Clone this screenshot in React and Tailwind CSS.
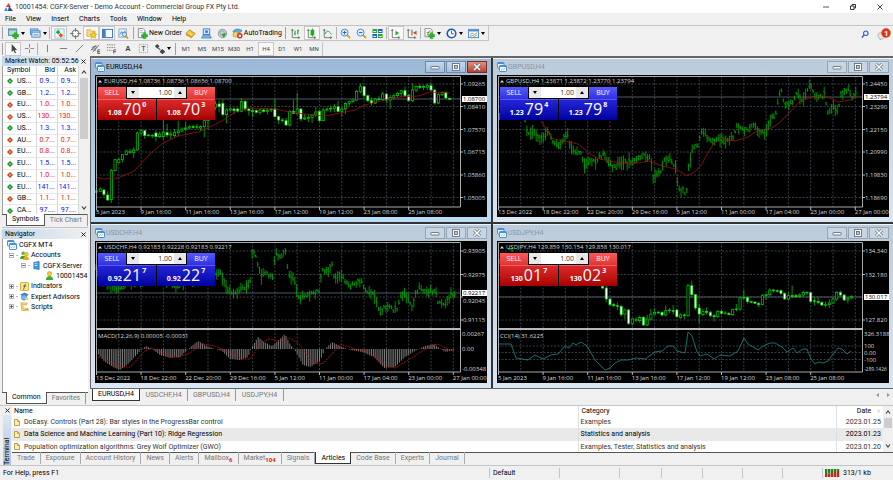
import React, { useState } from "react";

// ---------- chart data ----------
// every candle is [open, close, high, low] on the vertical scale of the pane

const eurCandles = [
  [415, 410, 403, 416], [412, 405, 400, 414], [408, 421, 405, 428], [423, 438, 412, 440],
  [437, 350, 345, 447], [350, 317, 315, 352], [325, 317, 312, 328], [317, 302, 300, 325],
  [302, 291, 287, 305], [295, 293, 285, 300], [295, 288, 280, 312], [288, 237, 233, 290],
  [237, 230, 225, 245], [230, 245, 228, 255], [245, 243, 240, 248], [245, 244, 240, 252],
  [237, 248, 230, 262], [248, 240, 232, 252], [248, 234, 195, 256], [236, 243, 210, 250],
  [243, 240, 232, 255], [245, 236, 225, 250], [236, 231, 200, 248], [231, 225, 220, 235],
  [225, 222, 205, 232], [222, 218, 214, 226], [218, 220, 212, 224], [220, 218, 210, 226],
  [222, 218, 214, 232], [218, 200, 195, 250], [200, 190, 180, 225], [190, 165, 160, 195],
  [160, 150, 140, 168], [150, 158, 140, 175], [148, 182, 137, 188], [182, 168, 162, 208],
  [168, 165, 160, 172], [165, 170, 160, 180], [165, 172, 160, 176], [172, 142, 132, 175],
  [142, 165, 138, 172], [165, 170, 160, 185], [170, 172, 160, 190], [170, 175, 166, 178],
  [175, 168, 163, 182], [168, 172, 164, 176], [172, 168, 162, 182], [168, 166, 162, 174],
  [165, 188, 135, 190], [188, 198, 185, 210], [198, 200, 192, 205], [200, 213, 192, 216],
  [213, 172, 168, 218], [172, 178, 137, 180], [178, 165, 117, 182], [165, 195, 162, 202],
  [195, 192, 180, 198], [193, 190, 182, 205], [190, 183, 180, 207], [183, 174, 158, 188],
  [172, 200, 168, 203], [200, 168, 160, 202], [168, 165, 160, 172], [165, 163, 155, 175],
  [163, 158, 150, 175], [158, 172, 140, 175], [172, 165, 160, 188], [165, 148, 145, 180],
  [148, 143, 140, 155], [143, 138, 136, 146], [138, 112, 108, 140], [112, 98, 88, 118],
  [98, 125, 95, 130], [125, 140, 122, 145], [140, 147, 130, 155], [147, 135, 132, 150],
  [135, 136, 125, 140], [136, 120, 113, 140], [120, 138, 118, 148], [138, 130, 122, 165],
  [130, 125, 120, 136], [125, 118, 114, 130], [118, 110, 108, 130], [110, 125, 98, 130],
  [125, 140, 120, 143], [140, 108, 88, 145], [108, 97, 95, 115], [97, 100, 90, 105],
  [100, 97, 92, 108], [100, 95, 88, 108], [95, 108, 85, 112], [108, 147, 105, 152],
  [147, 122, 118, 150], [122, 115, 112, 126], [115, 132, 112, 136], [133, 136, 130, 138],
];

const jpyCandles = [
  [187, 192, 184, 196], [192, 225, 186, 235], [225, 242, 222, 246], [242, 245, 236, 250],
  [245, 246, 235, 258], [247, 272, 243, 278], [270, 258, 254, 285], [258, 298, 255, 302],
  [298, 285, 282, 305], [288, 287, 280, 294], [290, 280, 275, 296], [280, 303, 276, 306],
  [303, 285, 272, 306], [285, 270, 255, 290], [270, 265, 253, 274], [265, 267, 260, 270],
  [265, 273, 262, 278], [273, 260, 245, 278], [260, 258, 252, 268], [260, 261, 243, 272],
  [258, 278, 254, 282], [280, 273, 268, 284], [273, 274, 268, 286], [275, 185, 180, 278],
  [185, 212, 170, 218], [212, 252, 210, 258], [252, 270, 240, 298], [272, 263, 255, 276],
  [262, 265, 250, 272], [265, 275, 260, 280], [275, 278, 270, 292], [278, 262, 258, 282],
  [262, 268, 258, 272], [268, 267, 262, 272], [268, 272, 264, 274], [272, 257, 254, 275],
  [257, 255, 240, 262], [255, 222, 218, 260], [222, 220, 198, 228], [220, 233, 218, 238],
  [233, 234, 230, 238], [234, 238, 232, 240], [238, 242, 234, 250], [242, 215, 210, 244],
  [215, 212, 208, 228], [212, 198, 192, 218], [198, 200, 194, 206], [200, 201, 196, 206],
  [200, 208, 196, 214], [208, 225, 205, 228], [225, 215, 206, 230], [215, 217, 185, 222],
  [215, 218, 210, 222], [218, 213, 208, 222], [213, 205, 200, 218], [205, 206, 202, 214],
  [206, 232, 204, 236], [230, 232, 220, 245], [232, 235, 222, 240], [235, 243, 232, 246],
  [243, 242, 232, 250], [242, 237, 225, 252], [237, 225, 220, 240], [225, 205, 202, 230],
  [205, 213, 200, 218], [213, 228, 210, 232], [228, 224, 218, 238], [222, 218, 214, 226],
];

const eurAverage = [[1, 102], [8, 104], [23, 103], [39, 96], [55, 79], [68, 68], [83, 61], [103, 57], [113, 53], [130, 44], [140, 37], [150, 34], [158, 33], [180, 34], [195, 37], [210, 39], [230, 41], [250, 37], [260, 35], [270, 30], [290, 25], [305, 22], [323, 21], [335, 17], [355, 18]];

const gbpPath = [[28, 48], [30, 58], [37, 56], [41, 62], [46, 64], [51, 56], [56, 66], [61, 72], [67, 62], [71, 62], [75, 74], [79, 80], [84, 76], [87, 93], [93, 87], [99, 87], [107, 77], [111, 89], [119, 92], [123, 89], [129, 87], [139, 84], [148, 80], [154, 84], [156, 104], [160, 99], [163, 99], [167, 84], [173, 84], [179, 92], [181, 116], [185, 113], [189, 122], [191, 94], [195, 77], [201, 69], [205, 57], [209, 62], [215, 66], [221, 64], [226, 67], [233, 64], [237, 63], [239, 50], [245, 54], [251, 56], [257, 49], [261, 56], [268, 59], [271, 49], [276, 42], [279, 38], [282, 19], [284, 16], [287, 29], [293, 31], [299, 19], [305, 24], [309, 19], [314, 11], [317, 19], [321, 24], [327, 19], [331, 38], [335, 32], [341, 36], [344, 16], [351, 16], [355, 22], [359, 16]];

const gbpAverage = [[44, 46], [49, 54], [56, 64], [68, 66], [81, 69], [93, 79], [103, 84], [118, 87], [135, 89], [153, 86], [165, 91], [179, 94], [190, 101], [199, 96], [205, 89], [210, 79], [217, 68], [225, 64], [238, 66], [251, 62], [261, 55], [271, 55], [281, 49], [293, 37], [303, 26], [315, 22], [328, 21], [341, 27], [353, 25], [360, 22]];

const chfPath = [[1, 30], [10, 40], [18, 46], [24, 48], [30, 44], [50, 38], [70, 38], [81, 46], [100, 38], [116, 30], [120, 34], [124, 30], [127, 35], [132, 49], [137, 52], [143, 50], [148, 46], [155, 45], [157, 9], [162, 18], [166, 35], [173, 33], [178, 38], [180, 14], [186, 16], [191, 8], [193, 33], [200, 41], [204, 58], [210, 55], [217, 52], [224, 51], [227, 30], [233, 30], [237, 23], [239, 38], [245, 33], [250, 40], [256, 46], [263, 41], [268, 43], [273, 53], [279, 50], [283, 68], [285, 75], [289, 66], [295, 67], [302, 69], [306, 53], [312, 56], [317, 64], [320, 53], [325, 48], [333, 50], [340, 50], [343, 60], [350, 64], [353, 56], [361, 52]];

const macdPath = [[1, 108], [3, 113], [10, 121], [18, 126], [25, 129], [32, 124], [38, 118], [45, 110], [51, 105], [57, 108], [65, 114], [75, 117], [85, 116], [93, 108], [103, 100], [112, 105], [120, 108], [127, 110], [135, 118], [145, 119], [153, 116], [157, 106], [163, 96], [169, 101], [177, 105], [185, 98], [190, 93], [195, 103], [201, 111], [208, 124], [215, 126], [225, 120], [230, 108], [237, 101], [245, 105], [255, 109], [267, 111], [279, 116], [289, 127], [300, 126], [310, 116], [320, 110], [330, 105], [339, 103], [350, 111], [360, 109]];

const macdSignal = [[3, 116], [10, 118], [23, 126], [35, 126], [50, 110], [57, 107], [70, 113], [83, 116], [95, 112], [108, 103], [120, 105], [133, 111], [147, 118], [155, 118], [165, 103], [173, 98], [185, 100], [195, 97], [205, 104], [217, 122], [227, 123], [237, 113], [245, 103], [260, 108], [275, 111], [290, 124], [300, 127], [315, 118], [330, 108], [342, 103], [353, 108], [359, 110]];

const cciPath = [[1, 103], [14, 103], [19, 117], [31, 119], [38, 114], [46, 118], [54, 114], [61, 113], [68, 105], [72, 107], [76, 102], [79, 104], [84, 101], [90, 105], [98, 119], [108, 129], [113, 127], [118, 122], [124, 119], [131, 119], [139, 117], [148, 118], [158, 111], [165, 110], [171, 105], [176, 105], [180, 110], [188, 112], [191, 91], [195, 95], [200, 111], [203, 115], [210, 113], [217, 118], [223, 114], [233, 115], [241, 110], [247, 97], [251, 103], [261, 109], [266, 105], [273, 102], [278, 102], [285, 106], [290, 111], [296, 107], [300, 112], [306, 108], [310, 108], [314, 118], [318, 123], [321, 121], [326, 122], [331, 120], [336, 113], [341, 107], [345, 108], [350, 113], [354, 110]];

const decemberDates = ["13 Dec 2022", "18 Dec 22:00", "22 Dec 20:00", "29 Dec 16:00", "5 Jan 12:00", "11 Jan 00:00", "17 Jan 04:00", "23 Jan 00:00", "27 Jan 00:00"];
const januaryDates = ["5 Jan 2023", "9 Jan 16:00", "11 Jan 16:00", "13 Jan 16:00", "17 Jan 12:00", "19 Jan 12:00", "23 Jan 08:00", "25 Jan 08:00"];

const quotes = [
  ["US...", "0.9...", "0.9...", true],
  ["GB...", "1.2...", "1.2...", true],
  ["EU...", "1.0...", "1.0...", false],
  ["US...", "130...", "130...", false],
  ["US...", "1.3...", "1.3...", true],
  ["AU...", "0.7...", "0.7...", false],
  ["EU...", "0.8...", "0.8...", false],
  ["EU...", "1.5...", "1.5...", true],
  ["EU...", "1.0...", "1.0...", false],
  ["EU...", "141...", "141...", true],
  ["GB...", "1.1...", "1.1...", false],
  ["CA...", "97....", "97....", true],
];

const articles = [
  ["DoEasy. Controls (Part 28): Bar styles in the ProgressBar control", "Examples", "2023.01.25"],
  ["Data Science and Machine Learning (Part 10): Ridge Regression", "Statistics and analysis", "2023.01.23"],
  ["Population optimization algorithms: Grey Wolf Optimizer (GWO)", "Examples, Tester, Statistics and analysis", "2023.01.20"],
];

const terminalTabs = [
  ["Trade"], ["Exposure"], ["Account History"], ["News"], ["Alerts"], ["Mailbox", "6"],
  ["Market", "104"], ["Signals"], ["Articles"], ["Code Base"], ["Experts"], ["Journal"],
];

const FIRST_X = 1.5;
const STEP = 22.3;

const toPoints = (list) => list.map((p) => p.join(",")).join(" ");

// linear interpolation along a path of [x, y]
function valueAt(path, x) {
  for (let i = 1; i < path.length; i++) {
    if (x <= path[i][0]) {
      const [x0, y0] = path[i - 1];
      const [x1, y1] = path[i];
      return y0 + ((y1 - y0) * (x - x0)) / (x1 - x0);
    }
  }
  return path[path.length - 1][1];
}

// repeatable noise between 0 and 1
function noise(n) {
  const v = Math.sin(n * 127.1) * 43758.5453;
  return v - Math.floor(v);
}

// ---------- chart parts ----------

function Candles({ candles, start = 0, top }) {
  return candles.map(([open, close, high, low], i) => {
    const x = FIRST_X + (start + i) * (STEP / 6);
    const y = (v) => (v - top) / 3;
    const down = close > open;
    return (
      <g key={i} stroke="#00d400" strokeWidth="0.7">
        <line x1={x} x2={x} y1={y(high)} y2={y(low)} />
        <rect
          x={x - 1.1}
          width="2.2"
          y={y(Math.min(open, close))}
          height={Math.max(Math.abs(open - close) / 3, 0.6)}
          fill={down ? "#fff" : "#000"}
        />
      </g>
    );
  });
}

function Bars({ path }) {
  let d = "";
  const last = path[path.length - 1][0];
  for (let i = 0, x = path[0][0]; x <= last; i++, x += STEP / 12) {
    const mid = valueAt(path, x) + (noise(i) - 0.5) * 4;
    const up = 1.5 + noise(i + 400) ** 2 * 7;
    const down = 1.5 + noise(i + 800) ** 2 * 7;
    d += `M${x.toFixed(1)} ${(mid - up).toFixed(1)}V${(mid + down).toFixed(1)}`;
    d += `M${(x - 0.9).toFixed(1)} ${(mid - 1).toFixed(1)}h.9m0 1.5h.9`;
  }
  return <path d={d} stroke="#00b000" strokeWidth="0.8" fill="none" />;
}

function Macd() {
  let d = "";
  for (let x = 1.5; x < 360; x += STEP / 12) {
    d += `M${x.toFixed(1)} 108V${valueAt(macdPath, x).toFixed(1)}`;
  }
  return (
    <g fill="none">
      <path d={d} stroke="#989898" strokeWidth="0.8" />
      <polyline points={toPoints(macdSignal)} stroke="#d01010" strokeWidth="0.8" strokeDasharray="2 1" />
    </g>
  );
}

function Chart({ title, rows, prices, current, dates, indicator, children }) {
  const bottom = indicator ? 131 : 132;
  return (
    <svg viewBox="0 0 392 142" className="block w-full bg-black font-['Open_Sans',sans-serif]" role="img" aria-label={title}>
      <g stroke="#4c5964" strokeWidth="0.7" strokeDasharray="2 1.5">
        {Array.from({ length: 16 }, (_, i) => (
          <line key={i} x1={FIRST_X + (i + 1) * STEP} x2={FIRST_X + (i + 1) * STEP} y1="1" y2={bottom} />
        ))}
        {rows.map((y) => (
          <line key={y} x1="1" x2="365" y1={y} y2={y} />
        ))}
      </g>
      <line x1="1" x2="365" y1={current.y} y2={current.y} stroke="#4c5964" />
      {children}
      <path d={`M1.5 ${bottom}V1.5H365.5V${bottom}Z`} fill="none" stroke="#a8a8a8" />
      {indicator && <rect x="1" y="87" width="365" height="2" fill="#b8b8b8" />}
      <g fill="#d8d8d8" fontSize="6">
        <path d="M3 7.500l2-2.500 2 2.500z" />
        <text x="9" y="8">{title}</text>
        {indicator && <text x="3" y="97">{indicator.title}</text>}
        {prices.map(([label, y, labelY = y]) => (
          <g key={label}>
            <path d={`M365 ${y}h3`} stroke="#b8b8b8" />
            <text x="368" y={labelY + 2}>{label}</text>
          </g>
        ))}
        {indicator?.labels.map(([label, y]) => (
          <text key={label} x="367" y={y + 2} fontSize={label.length > 8 ? 5 : 6}>{label}</text>
        ))}
        {dates.map((label, i) => (
          <g key={label}>
            <path d={`M${FIRST_X + i * STEP * 2} ${bottom}v3`} stroke="#b8b8b8" />
            <text x={i * STEP * 2 + 1} y="139">{label}</text>
          </g>
        ))}
      </g>
      <rect x="367" y={current.y - 3} width="25" height="6" fill="#fff" />
      <text x="368" y={current.y + 2} fontSize="6" fill="#000">{current.label}</text>
    </svg>
  );
}

// ---------- one click trading ----------

function Price({ side, head, main, tail, tone }) {
  return (
    <button
      aria-label={side}
      className={`flex flex-1 items-start justify-center gap-px border-t text-white ${
        tone === "red"
          ? "border-[#f06060] bg-gradient-to-b from-[#dc2828] to-[#a80000]"
          : "border-[#5858f0] bg-gradient-to-b from-[#2424d8] to-[#0000a0]"
      }`}
    >
      <span className="pt-2 text-[7px] leading-[10px] font-bold">{head}</span>
      <span className="text-[16px] leading-[19px]">{main}</span>
      <span className="pt-px text-[7px] leading-[8px] font-bold">{tail}</span>
    </button>
  );
}

function TradePanel({ tone, sell, buy }) {
  const [lots, setLots] = useState("1.00");
  const top = tone === "red" ? "bg-gradient-to-b from-[#ff5858] to-[#e03434]" : "bg-gradient-to-b from-[#5858ff] to-[#3030e4]";
  return (
    <div className="absolute top-3 left-[3px] flex h-[33px] w-[117px] flex-col bg-black font-['Open_Sans',sans-serif]">
      <div className="flex h-3">
        <button className={`w-7 text-[7px] leading-3 text-white ${top}`}>SELL</button>
        <div className="flex flex-1 border-x border-b border-black bg-white">
          <button aria-label="Less" className="flex w-3 items-center justify-center bg-[#e8e8e8]">
            <svg viewBox="0 0 4 3" className="h-[3px] w-1"><path d="M0 0h4L2 3z" /></svg>
          </button>
          <input
            aria-label="Volume"
            value={lots}
            onChange={(e) => setLots(e.target.value)}
            className="w-0 flex-1 bg-white px-0.5 text-right text-[7px] leading-[11px] text-[#333]"
          />
          <button aria-label="More" className="flex w-3 items-center justify-center bg-[#e8e8e8]">
            <svg viewBox="0 0 4 3" className="h-[3px] w-1"><path d="M0 3h4L2 0z" /></svg>
          </button>
        </div>
        <button className={`w-7 text-[7px] leading-3 text-white ${top}`}>BUY</button>
      </div>
      <div className="flex flex-1 gap-px">
        <Price side="Sell" tone={tone} head={sell[0]} main={sell[1]} tail={sell[2]} />
        <Price side="Buy" tone={tone} head={buy[0]} main={buy[1]} tail={buy[2]} />
      </div>
    </div>
  );
}

// ---------- chart window ----------

function WindowIcon() {
  return (
    <svg viewBox="0 0 10 10" className="size-[10px] shrink-0" aria-hidden="true">
      <rect x="0.5" y="0.500" width="6.500" height="5.500" rx="0.600" fill="#e4f2ff" stroke="#4a90d0" />
      <path d="M0.500 1.500h6.500" stroke="#4a90d0" />
      <rect x="2.500" y="3.500" width="7" height="6" rx="0.600" fill="#f4faff" stroke="#4a90d0" />
      <path d="M2.500 4.500h7" stroke="#4a90d0" />
      <path d="M4 8l1.500-1.500 1 1L8.500 6" stroke="#7ab0dc" strokeWidth="0.700" fill="none" />
    </svg>
  );
}

function ChartWindow({ name, active, panel, children }) {
  const button = active
    ? "border-[#6e88a6] bg-gradient-to-b from-[#c4d8ee] to-[#a4bedb]"
    : "border-[#95a5b8] bg-[#c8d6e4]";
  return (
    <section
      className={`border-t px-1 pb-[5px] ${
        active ? "border-[#dcebfa] bg-gradient-to-b from-[#9cb8d6] to-[#b9dcf4]" : "border-[#eef4fa] bg-gradient-to-b from-[#bccbda] to-[#d9e6f4]"
      }`}
    >
      <header className="flex h-4 items-center gap-px">
        <WindowIcon />
        <h2 className={`flex-1 text-[7px] leading-[10px] ${active ? "text-black" : "text-[#8a96a2]"}`}>{name}</h2>
        <button aria-label="Minimize" className={`flex h-3 w-5 items-center justify-center border ${button}`}>
          <svg viewBox="0 0 10 8" className="h-2 w-[10px]"><rect x="1" y="3.500" width="8" height="2.500" rx="0.500" fill="#fff" stroke="#55606c" strokeWidth="0.800" /></svg>
        </button>
        <button aria-label="Maximize" className={`flex h-3 w-5 items-center justify-center border ${button}`}>
          <svg viewBox="0 0 10 8" className="h-2 w-[10px]" fill="none">
            <rect x="1.500" y="0.500" width="7" height="7" fill="#fff" stroke="#55606c" strokeWidth="0.800" />
            <rect x="3.500" y="2.500" width="3" height="3" stroke="#55606c" strokeWidth="0.800" fill="#b8c8d8" />
          </svg>
        </button>
        <button
          aria-label="Close"
          className={`flex h-3 w-5 items-center justify-center border ${
            active ? "border-[#7c2c20] bg-gradient-to-b from-[#e09080] to-[#c03c28]" : "border-[#95a5b8] bg-[#c8d6e4]"
          }`}
        >
          <svg viewBox="0 0 10 8" className="h-2 w-[10px]">
            <path d="M2 1l6 6M8 1L2 7" stroke="#55606c" strokeWidth="2.800" />
            <path d="M2 1l6 6M8 1L2 7" stroke="#fff" strokeWidth="1.600" />
          </svg>
        </button>
      </header>
      <div className="relative">
        {children}
        <TradePanel {...panel} />
      </div>
    </section>
  );
}

// ---------- toolbar icons, all on a 12 x 12 grid ----------

const plus = <path d="M6.500 5.500h2v-2h2.500v2h2V8h-2v2H8.500V8h-2z" transform="translate(-1.500 1.700)" fill="#20c020" stroke="#087808" strokeWidth="0.400" />;
const axes = <path d="M2.500 1v9.500H11M1 2.500h3M9.500 9v3" fill="none" stroke="#686868" strokeWidth="0.900" />;

const icons = {
  newChart: <><rect x="0.500" y="1" width="9" height="7" fill="#b8dcc0" stroke="#4c8ab8" /><path d="M1 2h8" stroke="#4c8ab8" />{plus}</>,
  profiles: <><rect x="0.500" y="1" width="8" height="6" fill="#b4d4f4" stroke="#4a88c4" /><rect x="2" y="3" width="9" height="7" fill="#dcecfc" stroke="#4a88c4" /><path d="M2 4.500h9M4 7.500h5" stroke="#4a88c4" /></>,
  market: <><rect x="1" y="1" width="10" height="10" fill="#eef7fe" stroke="#8fc0e8" /><path d="M2 4.500L4.500 2 7 4.500 4.500 7z" fill="#10b020" /><path d="M5 8l2.500-2.500L10 8l-2.500 2.500z" fill="#f05018" /></>,
  target: <><circle cx="6" cy="6" r="3.600" fill="#fff" stroke="#777" strokeWidth="1.200" /><path d="M6 0v4M6 8v4M0 6h4M8 6h4" stroke="#777" strokeWidth="1.200" /></>,
  navigator: <><path d="M1 2h4l1 1.500h4V9H1z" fill="#f8dc80" stroke="#c89820" strokeWidth="0.700" /><path d="M8 4l1.200 2.500 2.600.3-2 1.800.6 2.700L8 10l-2.400 1.300.6-2.700-2-1.800 2.600-.3z" fill="#fcd428" stroke="#b88410" strokeWidth="0.500" /></>,
  terminal: <><rect x="0.500" y="1.500" width="11" height="9" fill="#f4faff" stroke="#3070b8" /><rect x="1" y="2" width="3" height="8" fill="#3c80cc" /></>,
  tester: <><rect x="1" y="1" width="8" height="9" fill="#e8f1fa" stroke="#8ca8c4" /><path d="M2 7l2-3 1.500 2L8 3" fill="none" stroke="#3880c0" /><circle cx="7" cy="7" r="2.300" fill="#d4ecff" stroke="#4880b0" /><path d="M8.500 8.500L11 11.500" stroke="#d09818" strokeWidth="1.600" /></>,
  order: <><path d="M1.500 0.500h5l2 2v8h-7z" fill="#fff" stroke="#667" strokeWidth="0.800" /><path d="M3 3h3M3 5h4" stroke="#889" strokeWidth="0.700" />{plus}</>,
  editor: <><path d="M1 6l4-4 6 4-4 4.500z" fill="#f4c430" stroke="#9c6c08" strokeWidth="0.700" /><path d="M1 6l6 3v2L1 8z" fill="#d89418" /><path d="M3.500 5l4 2.500" stroke="#fff4b0" /></>,
  signal: <><rect x="2.500" y="1" width="7" height="6" fill="#dceefe" stroke="#3878c8" /><circle cx="6" cy="4" r="1.600" fill="#3878c8" /><path d="M0.500 11l2-3.500h7l2 3.500z" fill="#78b0e8" stroke="#3878c8" strokeWidth="0.700" /></>,
  globe: <><circle cx="6" cy="6" r="4.600" fill="#c8d4d8" stroke="#78888c" strokeWidth="0.800" /><circle cx="5.500" cy="5.500" r="2.500" fill="none" stroke="#90a0a4" /><path d="M5 6.500l5-1L7.500 11z" fill="#30a030" /></>,
  auto: <><path d="M1 4c1-3 7-4 10-1L6.500 7z" fill="#5ab0e0" stroke="#2470a8" strokeWidth="0.600" /><circle cx="4" cy="7" r="3" fill="#f4d060" stroke="#a88018" strokeWidth="0.600" /><circle cx="8.500" cy="8.500" r="3" fill="#e02818" /><rect x="7.300" y="7.300" width="2.400" height="2.400" fill="#fff" /></>,
  bars: <>{axes}<path d="M5.500 3v5M4.500 6.500h1M8.500 2v5M8.500 3h1.500" stroke="#10a818" strokeWidth="1.200" /></>,
  candles: <>{axes}<rect x="5" y="2" width="4" height="6" fill="#18b020" /><path d="M7 .5v9" stroke="#18b020" /></>,
  line: <>{axes}<path d="M3.500 6.500C5 2.500 7 2.500 10.500 7" fill="none" stroke="#10a818" /></>,
  zoomIn: <><path d="M7.500 7.500L11 11" stroke="#d8a820" strokeWidth="2.200" /><circle cx="5" cy="5" r="3.800" fill="#dff0ff" stroke="#3f88c8" /><path d="M3 5h4M5 3v4" stroke="#2468b0" strokeWidth="1.100" /></>,
  zoomOut: <><path d="M7.500 7.500L11 11" stroke="#d8a820" strokeWidth="2.200" /><circle cx="5" cy="5" r="3.800" fill="#dff0ff" stroke="#3f88c8" /><path d="M3 5h4" stroke="#2468b0" strokeWidth="1.100" /></>,
  tile: <><path d="M.5 1h5v4.500h-5zM6.500 6.500h5V11h-5z" fill="#28a828" /><path d="M6.500 1h5v4.500h-5zM.5 6.500h5V11h-5z" fill="#2860c0" /><path d="M1.500 3.700h3M7.500 3.700h3M1.500 9.200h3M7.500 9.200h3" stroke="#fff" strokeWidth="1.100" /></>,
  scroll: <>{axes}<path d="M6 3l4 2.500L6 8z" fill="#18b020" /></>,
  shift: <>{axes}<path d="M6.500 2v6" stroke="#555" /><path d="M11.500 3v4.500L7.500 5.200z" fill="#d84818" /></>,
  indicators: <><path d="M1 .5h6l2 2v7H1z" fill="#f2f2f2" stroke="#777" strokeWidth="0.800" /><path d="M3 8c2 0 1-5 4-5M3 5h3" fill="none" stroke="#666" strokeWidth="0.800" />{plus}</>,
  clock: <><circle cx="6" cy="6" r="4.700" fill="#f2f8ff" stroke="#1858b8" strokeWidth="1.700" /><path d="M6 3v3.300h2.500" fill="none" stroke="#345" strokeWidth="0.900" /></>,
  template: <><rect x="0.500" y="1.500" width="11" height="9" fill="#f4faff" stroke="#4888c4" /><path d="M1 3h10" stroke="#4888c4" strokeWidth="1.500" /><path d="M2 7l2.500-1.500L7 7l3-2" fill="none" stroke="#d06830" strokeWidth="0.800" /><path d="M2 9l3-.8 2 .8 3-1.500" fill="none" stroke="#40a050" strokeWidth="0.800" /></>,
  cursor: <path d="M4 1v9l2-2 1.500 3.200 1.300-.6L7.400 7.500H10z" fill="#444" />,
  cross: <path d="M6 1v4M6 7v4M1 6h4M7 6h4" stroke="#777" strokeWidth="0.900" />,
  vertical: <path d="M6 2v8" stroke="#777" />,
  horizontal: <path d="M2 6h8" stroke="#777" />,
  trend: <path d="M2 10l8-8" stroke="#777" />,
  channel: <><path d="M1 8l6-6M3 10l7-8M2 5l5 1M3 3.500l5 1M1.500 7l5 1" stroke="#555" strokeWidth="0.800" /><path d="M11 7.500H8.500v4H11M8.500 9.500H11" fill="none" stroke="#333" strokeWidth="0.800" /></>,
  fibo: <><path d="M1 2h9M1 5h9M1 8h6" stroke="#777" strokeDasharray="1.500 1" /><path d="M8.500 11.500v-4H11M8.500 9.500H11" fill="none" stroke="#333" strokeWidth="0.800" /></>,
  letter: <text x="3.500" y="9" fontSize="8" fontWeight="bold" fill="#444">A</text>,
  label: <><rect x="1.500" y="1.500" width="9" height="9" fill="none" stroke="#999" strokeDasharray="1 1" /><text x="3.500" y="9" fontSize="8" fill="#333">T</text></>,
  arrows: <><path d="M1 3.500L3.500 1 6 3.500 3.500 6z" fill="#444" /><path d="M4 5l3 2.500M7 9.500l2.200-2.200 2.200 2.200-2.200 2z" stroke="#444" strokeWidth="1.200" fill="#444" /></>,
};

function Tool({ icon, name, pressed, menu, text }) {
  return (
    <button
      aria-label={name}
      className={`flex h-[14px] items-center justify-center ${menu ? "w-[22px] gap-0.5" : text ? "gap-px px-px" : "w-4"} ${
        pressed ? "border border-[#c8c8c8] bg-[#f8f8f8]" : ""
      }`}
    >
      <svg viewBox="0 0 12 12" className="size-[11px] shrink-0 font-['Liberation_Sans',sans-serif]" aria-hidden="true">{icons[icon]}</svg>
      {text && <span className="text-[7px] leading-[10px] whitespace-nowrap">{text}</span>}
      {menu && <svg viewBox="0 0 4 3" className="h-[3px] w-1 shrink-0" aria-hidden="true"><path d="M0 0h4L2 3z" /></svg>}
    </button>
  );
}

const Divider = () => <span className="mr-px h-3 w-px bg-[#b4b4b4]" />;
const Grip = () => <span className="mx-0.5 h-3 w-px bg-[#a0a0a0]" />;

function Toolbars() {
  const [period, setPeriod] = useState("H4");
  return (
    <div className="border-t border-[#c4c4c4]">
      <div className="flex h-[15px] items-center justify-between">
        <div className="flex items-center border-r border-b border-[#c4c4c4]">
          <Grip />
          <Tool icon="newChart" name="New chart" menu />
          <Tool icon="profiles" name="Profiles" menu />
          <Divider />
          <Tool icon="market" name="Market Watch" pressed />
          <Tool icon="target" name="Data Window" />
          <Tool icon="navigator" name="Navigator" pressed />
          <Tool icon="terminal" name="Terminal" pressed />
          <Tool icon="tester" name="Strategy Tester" />
          <Grip />
          <Tool icon="order" name="New Order" text="New Order" />
          <Tool icon="editor" name="MetaEditor" />
          <Tool icon="signal" name="Signals" />
          <Tool icon="globe" name="Community" />
          <Tool icon="auto" name="AutoTrading" text="AutoTrading" />
          <Grip />
          <Tool icon="bars" name="Bar chart" />
          <Tool icon="candles" name="Candlesticks" pressed />
          <Tool icon="line" name="Line chart" />
          <Divider />
          <Tool icon="zoomIn" name="Zoom in" />
          <Tool icon="zoomOut" name="Zoom out" />
          <Tool icon="tile" name="Tile windows" />
          <Divider />
          <Tool icon="scroll" name="Auto scroll" pressed />
          <Tool icon="shift" name="Chart shift" />
          <Divider />
          <Tool icon="indicators" name="Indicators" menu />
          <Tool icon="clock" name="Periods" menu />
          <Tool icon="template" name="Templates" menu />
        </div>
        <div className="flex items-center gap-2 pr-0.5">
          <button aria-label="Search">
            <svg viewBox="0 0 10 10" className="block size-2" fill="none"><circle cx="6" cy="4" r="2.800" stroke="#3060c8" strokeWidth="1.400" /><path d="M4 6L1 9.500" stroke="#3060c8" strokeWidth="1.800" /></svg>
          </button>
          <button aria-label="Notifications">
            <svg viewBox="0 0 14 12" className="block h-3 w-[14px]">
              <path d="M1 7c0-3 6-3 7 0s-2 4-4 4l-1 1v-1.500C2 10 1 9 1 7z" fill="#e4e4e4" stroke="#a0a0a0" strokeWidth="0.700" />
              <circle cx="9" cy="5" r="4.700" fill="#e03418" />
              <text x="7" y="8" fontSize="8" fontWeight="bold" fill="#fff">1</text>
            </svg>
          </button>
        </div>
      </div>
      <div className="flex h-[15px] items-center">
        <Grip />
        <Tool icon="cursor" name="Cursor" pressed />
        <Tool icon="cross" name="Crosshair" />
        <Divider />
        <Tool icon="vertical" name="Vertical line" />
        <Tool icon="horizontal" name="Horizontal line" />
        <Tool icon="trend" name="Trendline" />
        <Tool icon="channel" name="Channel" />
        <Tool icon="fibo" name="Fibonacci" />
        <Tool icon="letter" name="Text" />
        <Tool icon="label" name="Text label" />
        <Tool icon="arrows" name="Arrows" menu />
        <Grip />
        {["M1", "M5", "M15", "M30", "H1", "H4", "D1", "W1", "MN"].map((p) => (
          <button
            key={p}
            onClick={() => setPeriod(p)}
            className={`h-[14px] w-4 text-[6px] leading-3 text-[#444] ${p === period ? "border border-[#c8c8c8] bg-[#f8f8f8]" : ""}`}
          >
            {p}
          </button>
        ))}
        <span className="h-[14px] w-px bg-[#c4c4c4]" />
      </div>
    </div>
  );
}

// ---------- side panels ----------

function PanelTitle({ children }) {
  return (
    <div className="flex h-[10px] items-center justify-between bg-gradient-to-r from-[#c4d8ec] to-[#f0f0f0] pr-0.5 pl-[3px]">
      <h2 className="text-[7px] leading-[10px] whitespace-nowrap">{children}</h2>
      <button aria-label="Close" className="shrink-0">
        <svg viewBox="0 0 5 5" className="block size-[5px]"><path d="M.5 .5l4 4M4.500 .5l-4 4" stroke="#222" /></svg>
      </button>
    </div>
  );
}

function ScrollArrow({ down }) {
  return (
    <svg viewBox="0 0 6 4" className="my-1 h-1 w-[6px]" fill="none" aria-hidden="true">
      <path d={down ? "M1 .5L3 3 5 .5" : "M1 3.500L3 1l2 2.500"} stroke="#444" strokeWidth="1.200" />
    </svg>
  );
}

function PanelTabs({ names }) {
  return (
    <div className="flex h-[13px] border-t border-[#555] pl-1">
      {names.map((name, i) => (
        <button
          key={name}
          className={`-mt-px h-3 px-[5px] text-[7px] leading-[11px] whitespace-nowrap ${
            i === 0 ? "border-x border-b border-[#555] bg-white" : "border-r border-[#999] text-[#777]"
          }`}
        >
          {name}
        </button>
      ))}
    </div>
  );
}

function MarketWatch() {
  return (
    <section className="border-b border-[#c4c4c4]">
      <PanelTitle>Market Watch: 05:52:56</PanelTitle>
      <div className="flex h-[148px] overflow-hidden border-l border-[#a0a0a0] bg-white">
        <table className="h-[151px] flex-1 table-fixed border-collapse text-right text-[7px] leading-[9px]">
          <thead>
            <tr className="border-b border-[#e0e0e0]">
              <th className="w-[33px] border-r border-[#d8d8d8] p-0 pl-1 text-left font-normal">Symbol</th>
              <th className="w-[21px] border-r border-[#d8d8d8] p-0 pr-0.5 font-normal">Bid</th>
              <th className="w-[21px] border-r border-[#d8d8d8] p-0 pr-0.5 font-normal">Ask</th>
            </tr>
          </thead>
          <tbody>
            {quotes.map(([symbol, bid, ask, up], i) => (
              <tr key={i} className={`border-b border-[#e8e8e8] ${up ? "text-[#1010f0]" : "text-[#f01010]"}`}>
                <td className="border-r border-[#d8d8d8] p-0 pl-1 text-left text-black">
                  <span className="flex items-center gap-1">
                    <svg viewBox="0 0 6 6" className="size-[6px] shrink-0" aria-hidden="true">
                      <path d="M0 3l3-3 3 3-3 3z" fill={up ? "#109820" : "#d84010"} />
                      <path d={up ? "M2 3.500L3 2l1 1.500z" : "M2 2.500L3 4l1-1.500z"} fill="#fff" />
                    </svg>
                    {symbol}
                  </span>
                </td>
                <td className="border-r border-[#d8d8d8] p-0 pr-0.5">{bid}</td>
                <td className="border-r border-[#d8d8d8] p-0 pr-0.5">{ask}</td>
              </tr>
            ))}
          </tbody>
        </table>
        <div className="flex w-[9px] flex-col items-center bg-[#f0f0f0]">
          <ScrollArrow />
          <div className="h-[61px] w-2 bg-[#cdcdcd]" />
          <div className="flex-1" />
          <ScrollArrow down />
        </div>
      </div>
      <PanelTabs names={["Symbols", "Tick Chart"]} />
    </section>
  );
}

const treeIcons = {
  accounts: <><circle cx="3.500" cy="2.500" r="2" fill="#58b848" /><path d="M0 9c0-5 7-5 7 0z" fill="#38a028" /><circle cx="7" cy="3.500" r="2.200" fill="#f0c838" stroke="#a87808" strokeWidth="0.400" /><path d="M3.500 10c0-5.500 6.500-5.500 6.500 0z" fill="#e8a818" /></>,
  server: <><path d="M2 1.500L8 .5v9L2 8.500z" fill="#3c98e0" stroke="#1868a8" strokeWidth="0.600" /><path d="M3 3h3M3 5h3" stroke="#fff" strokeWidth="0.800" /></>,
  user: <><circle cx="5" cy="3" r="2.400" fill="#f0c838" stroke="#b08010" strokeWidth="0.500" /><path d="M1 10c0-6 8-6 8 0z" fill="#38b028" /></>,
  indicator: <><rect x="0.500" y="0.500" width="9" height="9" rx="1" fill="#fce890" stroke="#d0a020" /><path d="M4 8.500L6 2M3.500 4.500h3.500" stroke="#555" fill="none" /></>,
  expert: <><path d="M0 3l5-2.500L10 3 5 5.500z" fill="#3c88d0" /><circle cx="4.500" cy="6" r="3" fill="#78b8e8" stroke="#2868a0" strokeWidth="0.600" /><circle cx="7.500" cy="7.500" r="1.800" fill="#f0d058" /></>,
  script: <><path d="M1 1h6c2 0 1 2 0 2H3l1 5h5c1 2-1 2-2 1.500H2z" fill="#fce068" stroke="#c09018" strokeWidth="0.600" /><path d="M5 6l2 1.500 2-1.500 .5 2.500h-4z" fill="#e0a820" /></>,
};

function TreeItem({ indent, toggle, icon, children }) {
  return (
    <li className={`flex items-center gap-0.5 ${indent}`}>
      {toggle && (
        <svg viewBox="0 0 5 5" className="size-[5px] shrink-0" fill="#fff" aria-hidden="true">
          <rect x="0.500" y="0.500" width="4" height="4" stroke="#999" strokeWidth="0.700" />
          <path d={toggle === "+" ? "M1 2.500h3M2.500 1v3" : "M1 2.500h3"} stroke="#333" strokeWidth="0.700" />
        </svg>
      )}
      <span className={toggle ? "w-0.5 border-t border-[#bbb]" : "hidden"} />
      {icon ? <svg viewBox="0 0 10 10" className="size-[9px] shrink-0" aria-hidden="true">{treeIcons[icon]}</svg> : <WindowIcon />}
      <span className="whitespace-nowrap">{children}</span>
    </li>
  );
}

function Navigator() {
  return (
    <section className="mt-px flex flex-1 flex-col">
      <PanelTitle>Navigator</PanelTitle>
      <div className="min-h-[146px] flex-1 border-l border-[#a0a0a0] bg-white pt-px">
        <ul className="grid h-[72px] text-[7px] leading-[10px]">
          <TreeItem indent="pl-1">CGFX MT4</TreeItem>
          <TreeItem indent="pl-[6px]" toggle="-" icon="accounts">Accounts</TreeItem>
          <TreeItem indent="pl-[18px]" toggle="-" icon="server">CGFX-Server</TreeItem>
          <TreeItem indent="pl-[42px]" icon="user">10001454</TreeItem>
          <TreeItem indent="pl-[6px]" toggle="+" icon="indicator">Indicators</TreeItem>
          <TreeItem indent="pl-[6px]" toggle="+" icon="expert">Expert Advisors</TreeItem>
          <TreeItem indent="pl-[6px]" toggle="+" icon="script">Scripts</TreeItem>
        </ul>
      </div>
      <PanelTabs names={["Common", "Favorites"]} />
    </section>
  );
}

// ---------- terminal ----------

function Terminal() {
  return (
    <section className="flex border-t border-[#c4c4c4] pl-0.5">
      <div className="flex w-[10px] flex-col items-center">
        <button aria-label="Close terminal" className="py-0.5">
          <svg viewBox="0 0 5 5" className="block size-[5px]"><path d="M.5 .5l4 4M4.500 .5l-4 4" stroke="#222" /></svg>
        </button>
        <h2 className="flex w-2 flex-1 rotate-180 items-center bg-gradient-to-t from-[#dce8f4] to-[#a8c4e0] text-[7px] leading-[8px] [writing-mode:vertical-rl]">
          Terminal
        </h2>
      </div>
      <div className="min-w-0 flex-1">
        <div className="flex h-[46px] overflow-hidden bg-white">
          <table className="h-[47px] flex-1 table-fixed border-collapse text-left text-[7px] leading-[10px]">
            <thead>
              <tr>
                <th className="border-r border-[#e0e0e0] p-0 pl-0.5 font-normal">Name</th>
                <th className="w-[258px] border-r border-[#e0e0e0] p-0 pl-[3px] font-normal">Category</th>
                <th className="w-[47px] p-0 pr-[3px] text-right font-normal">Date <span className="pl-1 text-[6px] text-[#aaa]">▿</span></th>
              </tr>
            </thead>
            <tbody>
              {articles.map(([name, category, date], i) => (
                <tr key={name} className={i === 1 ? "bg-[#e9e9e9]" : "text-[#333]"}>
                  <td className="border-r border-[#e0e0e0] p-0 pl-0.5">
                    <span className="flex items-center gap-1">
                      <svg viewBox="0 0 6 7" className="h-[7px] w-[6px] shrink-0" aria-hidden="true">
                        <path d="M.5 .5h3l2 2v4h-5z" fill="#fdf0b0" stroke="#b08828" strokeWidth="0.800" />
                        <path d="M3.500 .5v2h2" fill="none" stroke="#b08828" strokeWidth="0.700" />
                      </svg>
                      {name}
                    </span>
                  </td>
                  <td className="border-r border-[#e0e0e0] p-0 pl-0.5">{category}</td>
                  <td className="p-0 pr-0.5 text-right">{date}</td>
                </tr>
              ))}
            </tbody>
          </table>
          <div className="flex w-[10px] flex-col items-center bg-[#f0f0f0]">
            <ScrollArrow />
            <div className="h-[10px] w-2 bg-[#cdcdcd]" />
            <div className="flex-1" />
            <ScrollArrow down />
          </div>
        </div>
        <nav className="flex h-[13px] items-start border-t border-[#555] text-[7px]">
          {terminalTabs.map(([name, count]) => (
            <button
              key={name}
              className={`-mt-px h-3 px-[5px] leading-[10px] whitespace-nowrap ${
                name === "Articles" ? "border-x border-b border-[#333] bg-white" : "border-r border-[#aaa] text-[#777]"
              }`}
            >
              {name}
              {count && <sub className="text-[6px] font-bold text-[#f01010]">{count}</sub>}
            </button>
          ))}
        </nav>
      </div>
    </section>
  );
}

function StatusBar() {
  const cell = "h-[10px] border-l border-[#c4c4c4]";
  return (
    <footer className="flex h-[15px] items-center border-t border-[#c4c4c4] text-[7px] leading-[10px]">
      <span className="flex-1 pl-[3px]">For Help, press F1</span>
      <span className={`w-[70px] pl-[3px] ${cell}`}>Default</span>
      <span className={`w-[60px] ${cell}`} />
      <span className={`w-[42px] ${cell}`} />
      <span className={`w-[41px] ${cell}`} />
      <span className={`w-10 ${cell}`} />
      <span className={`w-10 ${cell}`} />
      <span className={`w-10 ${cell}`} />
      <span className={`flex w-[71px] items-center gap-[3px] pl-0.5 ${cell}`}>
        <svg viewBox="0 0 15 8" className="h-2 w-[15px]" aria-hidden="true">
          <path d="M1 0v5M4 0v4.500M7 0v4M10 0v3M13 0v2" stroke="#208820" strokeWidth="2.400" />
          <path d="M1 5v3M4 4.500V8M7 4v4M10 3v5M13 2v6" stroke="#c02818" strokeWidth="2.400" />
        </svg>
        313/1 kb
      </span>
    </footer>
  );
}

// ---------- page ----------

function App() {
  const [activeTab, setActiveTab] = useState("EURUSD,H4");

  return (
    <div className="flex min-h-screen flex-col bg-[#f0f0f0] font-['Roboto',sans-serif] text-black">
      <header className="flex h-[13px] items-center bg-white pl-1">
        <svg viewBox="0 0 9 8" className="mr-0.5 h-2 w-[9px]" aria-hidden="true">
          <path d="M4.500 0L7 4H2z" fill="#e04030" />
          <path d="M2 4l2 4H0z" fill="#30a0d8" />
          <path d="M5 3l4 5H4z" fill="#2848a0" />
        </svg>
        <h1 className="flex-1 text-[7px] leading-[10px] text-[#333]">
          10001454: CGFX-Server - Demo Account - Commercial Group FX Pty Ltd.
        </h1>
        <div className="flex">
          <button aria-label="Minimize" className="flex w-[27px] justify-center"><svg viewBox="0 0 6 6" className="size-[6px]"><path d="M0 3h6" stroke="#555" /></svg></button>
          <button aria-label="Restore" className="flex w-[27px] justify-center"><svg viewBox="0 0 6 6" className="size-[6px]" fill="none"><path d="M.5 2h3.500v3.500H.5zM2 2V.5h3.500V4H4" stroke="#333" /></svg></button>
          <button aria-label="Close" className="flex w-[27px] justify-center"><svg viewBox="0 0 6 6" className="size-[6px]"><path d="M.5 .5l5 5M5.500 .5l-5 5" stroke="#333" strokeWidth="0.900" /></svg></button>
        </div>
      </header>

      <nav className="flex h-3 items-center gap-[10px] pl-[5px] text-[7px] leading-[10px]">
        {["File", "View", "Insert", "Charts", "Tools", "Window", "Help"].map((item) => (
          <button key={item}>{item}</button>
        ))}
      </nav>

      <Toolbars />

      <main className="flex flex-1">
        <aside className="flex w-[88px] shrink-0 flex-col pl-0.5">
          <MarketWatch />
          <Navigator />
        </aside>

        <div className="ml-0.5 flex min-w-0 flex-1 flex-col">
          <div className="grid grid-cols-2 gap-0.5 border-t-2 border-b border-l border-[#666] bg-[#333]">
            <ChartWindow
              name="EURUSD,H4"
              active
              panel={{ tone: "red", sell: ["1.08", "70", "0"], buy: ["1.08", "70", "3"] }}
            >
              <Chart
                title="EURUSD,H4  1.08736 1.08736 1.08656 1.08700"
                rows={[9, 31.5, 54.5, 77, 100, 122.5]}
                prices={[["1.09265", 9], ["1.08410", 31.5], ["1.07570", 54.5], ["1.06715", 77], ["1.05860", 100], ["1.05005", 122.5]]}
                current={{ y: 24, label: "1.08700" }}
                dates={januaryDates}
              >
                <Candles candles={eurCandles} top={63} />
                <polyline points={toPoints(eurAverage)} fill="none" stroke="#a01010" strokeWidth="0.800" />
              </Chart>
            </ChartWindow>

            <ChartWindow name="GBPUSD,H4" panel={{ tone: "blue", sell: ["1.23", "79", "4"], buy: ["1.23", "79", "8"] }}>
              <Chart
                title="GBPUSD,H4  1.23871 1.23872 1.23770 1.23794"
                rows={[9, 31.5, 54.5, 77, 100, 122.5]}
                prices={[["1.24450", 9], ["1.23290", 31.5], ["1.22150", 54.5], ["1.20990", 77], ["1.19830", 100], ["1.18690", 122.5]]}
                current={{ y: 22, label: "1.23794" }}
                dates={decemberDates}
              >
                <Bars path={gbpPath} />
                <path d="M2 38v7" stroke="#40d840" />
                <polyline points={toPoints(gbpAverage)} fill="none" stroke="#a01010" strokeWidth="0.800" />
              </Chart>
            </ChartWindow>

            <ChartWindow name="USDCHF,H4" panel={{ tone: "blue", sell: ["0.92", "21", "7"], buy: ["0.92", "22", "7"] }}>
              <Chart
                title="USDCHF,H4  0.92183 0.92228 0.92183 0.92217"
                rows={[10, 33.5, 56, 79]}
                prices={[["0.93905", 10], ["0.92975", 33.5], ["0.92045", 56, 60], ["0.91115", 79]]}
                current={{ y: 52, label: "0.92217" }}
                dates={decemberDates}
                indicator={{
                  title: "MACD(12,26,9) 0.00005 -0.00031",
                  labels: [["0.00267", 93], ["0.00", 108], ["-0.00348", 128]],
                }}
              >
                <Bars path={chfPath} />
                <Macd />
              </Chart>
            </ChartWindow>

            <ChartWindow name="USDJPY,H4" panel={{ tone: "red", sell: ["130", "01", "7"], buy: ["130", "02", "3"] }}>
              <Chart
                title="USDJPY,H4  129.859 130.154 129.858 130.017"
                rows={[10, 33.5, 56, 79, 105, 111.5, 118.5]}
                prices={[["134.340", 10], ["132.180", 33.5], ["127.820", 79]]}
                current={{ y: 56, label: "130.017" }}
                dates={januaryDates}
                indicator={{
                  title: "CCI(14) 31.6225",
                  labels: [["326.3188", 93], ["100", 105], ["0.00", 111.5], ["-100", 118.5], ["-289.1426", 128]],
                }}
              >
                <path d="M2 18v5M11 8h3M15 7v4" stroke="#00c800" />
                <Candles candles={jpyCandles} start={28} top={51} />
                <polyline points={toPoints(cciPath)} fill="none" stroke="#207878" strokeWidth="0.900" />
              </Chart>
            </ChartWindow>
          </div>

          <div className="flex h-[14px] items-start pl-0.5 text-[7px]">
            {["EURUSD,H4", "USDCHF,H4", "GBPUSD,H4", "USDJPY,H4"].map((name) => (
              <button
                key={name}
                onClick={() => setActiveTab(name)}
                className={`h-3 w-12 leading-[11px] ${
                  activeTab === name ? "border-x border-b border-[#333] bg-white" : "border-r border-[#999] text-[#777]"
                }`}
              >
                {name}
              </button>
            ))}
            <div className="flex flex-1 justify-end gap-2 pt-1 pr-[3px]">
              <button aria-label="Scroll left"><svg viewBox="0 0 3 4" className="block h-1 w-[3px]"><path d="M3 0v4L0 2z" fill="#999" /></svg></button>
              <button aria-label="Scroll right"><svg viewBox="0 0 3 4" className="block h-1 w-[3px]"><path d="M0 0v4l3-2z" fill="#999" /></svg></button>
            </div>
          </div>
        </div>
      </main>

      <Terminal />
      <StatusBar />
    </div>
  );
}

export default App;
